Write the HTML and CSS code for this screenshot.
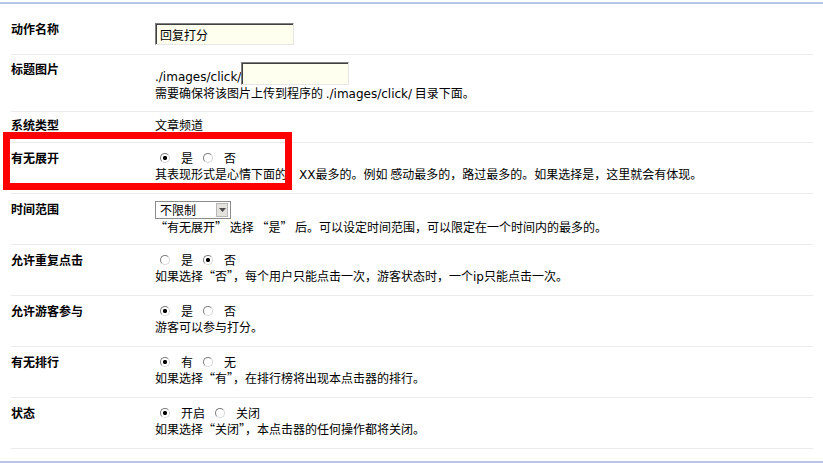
FILE: index.html
```html
<!DOCTYPE html>
<html lang="zh-CN">
<head>
    <meta charset="UTF-8">
    <title>点击器设置</title>
    <link rel="stylesheet" href="styles.css">
</head>
<body>
    <div class="panel">
        <div class="row row-first">
            <div class="label">动作名称</div>
            <div class="value">
                <input type="text" class="text-input name-input" value="回复打分">
            </div>
        </div>
        <div class="row row-image">
            <div class="label">标题图片</div>
            <div class="value">
                <div class="path-line">
                    <span class="en">./images/click/</span><input type="text" class="text-input img-input">
                </div>
                <div class="hint">需要确保将该图片上传到程序的 <span class="en">./images/click/</span> 目录下面。</div>
            </div>
        </div>
        <div class="row row-short">
            <div class="label">系统类型</div>
            <div class="value">文章频道</div>
        </div>
        <div class="row">
            <div class="label">有无展开</div>
            <div class="value">
                <div class="radios">
                    <input type="radio" name="expand" checked><span class="opt">是</span>
                    <input type="radio" name="expand"><span class="opt">否</span>
                </div>
                <div class="hint">其表现形式是心情下面的，<span class="en">XX</span>最多的。例如 感动最多的，路过最多的。如果选择是，这里就会有体现。</div>
            </div>
        </div>
        <div class="row">
            <div class="label">时间范围</div>
            <div class="value">
                <div class="select">
                    <span class="select-text">不限制</span>
                    <span class="select-btn">
                        <svg width="7" height="4" viewBox="0 0 7 4"><path d="M0 0h7L3.5 4z" fill="#4d4d4d"/></svg>
                    </span>
                </div>
                <div class="hint">“有无展开” 选择 “是” 后。可以设定时间范围，可以限定在一个时间内的最多的。</div>
            </div>
        </div>
        <div class="row">
            <div class="label">允许重复点击</div>
            <div class="value">
                <div class="radios">
                    <input type="radio" name="repeat"><span class="opt">是</span>
                    <input type="radio" name="repeat" checked><span class="opt">否</span>
                </div>
                <div class="hint">如果选择“否”，每个用户只能点击一次，游客状态时，一个<span class="en">ip</span>只能点击一次。</div>
            </div>
        </div>
        <div class="row">
            <div class="label">允许游客参与</div>
            <div class="value">
                <div class="radios">
                    <input type="radio" name="guest" checked><span class="opt">是</span>
                    <input type="radio" name="guest"><span class="opt">否</span>
                </div>
                <div class="hint">游客可以参与打分。</div>
            </div>
        </div>
        <div class="row">
            <div class="label">有无排行</div>
            <div class="value">
                <div class="radios">
                    <input type="radio" name="rank" checked><span class="opt">有</span>
                    <input type="radio" name="rank"><span class="opt">无</span>
                </div>
                <div class="hint">如果选择“有”，在排行榜将出现本点击器的排行。</div>
            </div>
        </div>
        <div class="row">
            <div class="label">状态</div>
            <div class="value">
                <div class="radios">
                    <input type="radio" name="state" checked><span class="opt">开启</span>
                    <input type="radio" name="state"><span class="opt">关闭</span>
                </div>
                <div class="hint">如果选择“关闭”，本点击器的任何操作都将关闭。</div>
            </div>
        </div>

        <!-- annotation box -->
        <div class="mark"></div>
    </div>
</body>
</html>
```

FILE: styles.css
```css
body { margin: 0; font-family: "Noto Sans CJK SC", sans-serif; font-size: 12px; color: #000; background: #fff; }
.en { font-family: "DejaVu Sans", sans-serif; }

.panel { position: relative; margin-top: 2px; border-top: 2px solid #b6c6ea; border-bottom: 2px solid #b6c6ea; padding-bottom: 12px; }

.row { box-sizing: border-box; display: grid; grid-template-columns: 144px 1fr; align-items: start; height: 51px; margin: 0 10px 0 11px; padding-top: 7px; border-bottom: 1px solid #ebebeb; line-height: 16px; overflow: hidden; }
.row-first { padding-top: 17px; }
.row-image { height: 57px; padding-top: 6px; }
.row-short { height: 31px; padding-top: 5px; }

.label, .hint, .value { height: auto; }
.label { font-weight: bold; height: 16px; }
.hint { height: 16px; white-space: nowrap; }

.text-input { box-sizing: border-box; margin: 0; padding: 0 4px; font: inherit; font-size: 12px; background: #fffff0; border: 1px solid; border-color: #808080 #e6e6e6 #e6e6e6 #808080; box-shadow: inset 1px 1px 0 #404040; outline: none; }
.name-input { display: block; width: 139px; height: 22px; margin-top: 2px; }
.row-image .value { padding-top: 1px; }
.path-line { display: flex; align-items: flex-end; height: 23px; }
.img-input { width: 108px; height: 23px; }

.radios { display: flex; align-items: center; height: 16px; }
.radios input { appearance: none; -webkit-appearance: none; box-sizing: border-box; width: 10px; height: 10px; margin: 0 11px 0 5px; border-radius: 50%; border: 1px solid; border-color: #7c7c7c #d6d6d6 #d6d6d6 #7c7c7c; background: #fff; }
.radios input:checked { background: radial-gradient(circle, #000 0 1.8px, #fff 2.4px); }
.opt { margin-right: 5px; }

.select { box-sizing: border-box; display: flex; align-items: center; justify-content: space-between; width: 76px; height: 18px; border: 1px solid #8c8c8c; background: #fff; }
.select-text { padding-left: 4px; }
.select-btn { box-sizing: border-box; display: flex; align-items: center; justify-content: center; width: 12px; height: 14px; margin-right: 2px; background: #e4e2dc; border: 1px solid #b8b8b8; }

.mark { position: absolute; left: 3px; top: 128px; width: 275px; height: 44px; border: 7px solid #f00; }
```
